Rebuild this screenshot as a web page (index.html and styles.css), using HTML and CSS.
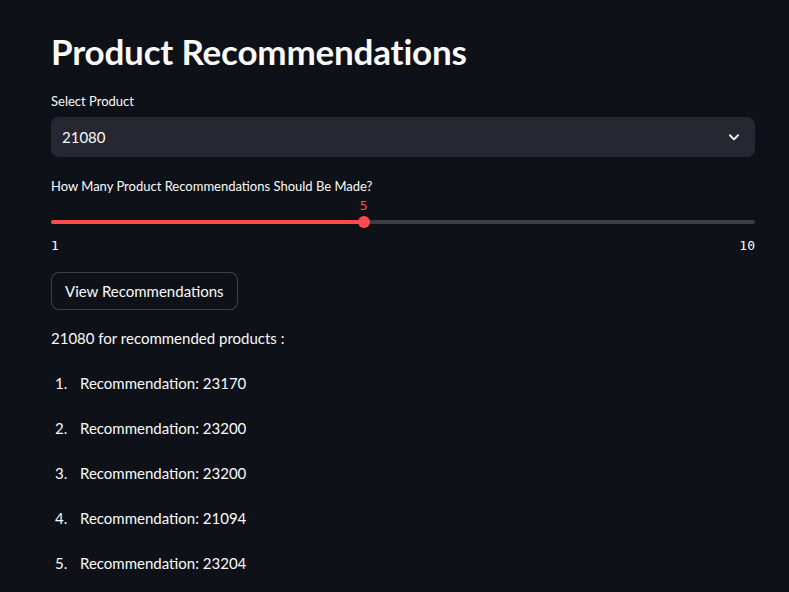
FILE: index.html
```html
<!DOCTYPE html>
<html>
<head>
<meta charset="utf-8">
<link rel="stylesheet" href="styles.css">
</head>
<body>
<main class="main">
  <h1 class="title">Product Recommendations</h1>

  <div class="field">
    <label class="label">Select Product</label>
    <div class="select">
      <span class="select-value">21080</span>
      <svg class="chev" width="14" height="14" viewBox="0 0 24 24"><path d="M5 9l7 7 7-7" fill="none" stroke="#fafafa" stroke-width="3.2" stroke-linecap="round" stroke-linejoin="round"/></svg>
    </div>
  </div>

  <div class="field slider-field">
    <label class="label">How Many Product Recommendations Should Be Made?</label>
    <div class="slider">
      <div class="track">
        <div class="fill" style="width:44.4%"></div>
        <div class="thumb" style="left:44.4%"><span class="thumb-value">5</span></div>
      </div>
    </div>
    <div class="ticks"><span>1</span><span>10</span></div>
  </div>

  <button class="btn">View Recommendations</button>

  <p class="intro">21080 for recommended products :</p>

  <ol class="recs">
    <li>Recommendation: 23170</li>
    <li>Recommendation: 23200</li>
    <li>Recommendation: 23200</li>
    <li>Recommendation: 21094</li>
    <li>Recommendation: 23204</li>
  </ol>
</main>
</body>
</html>
```
FILE: styles.css
```css
html, body {
  margin: 0;
  padding: 0;
  background: #0e1117;
  color: #fafafa;
  font-family: "Lato", "Noto Sans", sans-serif;
  overflow: hidden;
}
.main {
  width: 704px;
  margin: 0 0 0 51px;
  padding-top: 29px;
}
.title {
  margin: 0;
  font-size: 35px;
  font-weight: 700;
  line-height: 44px;
  letter-spacing: -0.2px;
}
.field {
  margin-top: 19px;
}
.label {
  display: block;
  font-size: 13px;
  line-height: 18px;
  height: 18px;
}
.select {
  margin-top: 7px;
  height: 40px;
  background: #262730;
  border-radius: 8px;
  display: flex;
  align-items: center;
  justify-content: space-between;
  padding: 0 14px 0 11px;
  box-sizing: border-box;
}
.select-value {
  font-size: 15px;
}
.chev { display: block; }
.slider-field {
  margin-top: 20px;
}
.slider {
  position: relative;
  margin-top: 22px;
  height: 10px;
  display: flex;
  align-items: center;
}
.track {
  position: relative;
  width: 100%;
  height: 4px;
  background: #3b3d46;
  border-radius: 2px;
}
.fill {
  height: 4px;
  background: #ff4b4b;
  border-radius: 2px;
}
.thumb {
  position: absolute;
  top: 50%;
  width: 12px;
  height: 12px;
  margin: -6px 0 0 -6px;
  border-radius: 50%;
  background: #ff4b4b;
}
.thumb-value {
  position: absolute;
  bottom: 15px;
  left: 50%;
  transform: translateX(-50%);
  font-family: "DejaVu Sans Mono", monospace;
  font-size: 13px;
  color: #ff4b4b;
}
.ticks {
  display: flex;
  justify-content: space-between;
  margin-top: 11px;
  font-family: "DejaVu Sans Mono", monospace;
  font-size: 13px;
  line-height: 16px;
}
.btn {
  display: block;
  margin-top: 18px;
  height: 38px;
  padding: 0 13px;
  background: #0e1117;
  color: #fafafa;
  border: 1px solid rgba(250,250,250,0.2);
  border-radius: 8px;
  font-family: inherit;
  font-size: 15px;
  cursor: pointer;
}
.intro {
  margin: 17px 0 0;
  font-size: 15px;
  line-height: 22px;
}
.recs {
  margin: 23px 0 0;
  padding-left: 4px;
  list-style: none;
  counter-reset: rec;
  font-size: 15px;
}
.recs li {
  counter-increment: rec;
  display: flex;
  line-height: 22px;
  margin-bottom: 23px;
}
.recs li::before {
  content: counter(rec) ".";
  width: 25px;
  flex: none;
}
```
